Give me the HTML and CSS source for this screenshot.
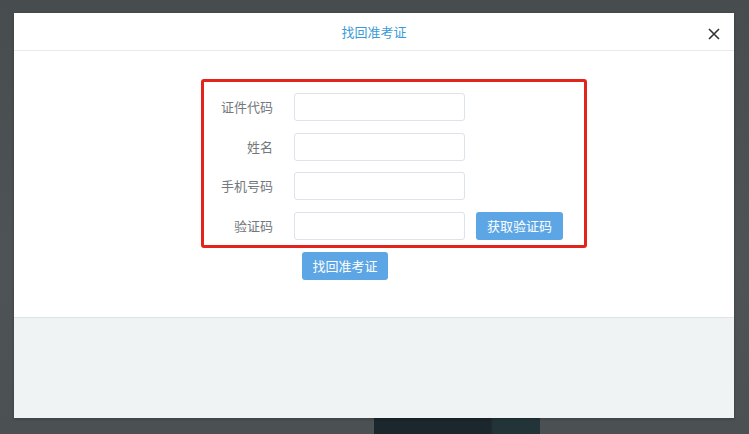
FILE: index.html
```html
<!DOCTYPE html>
<html lang="zh-CN">
<head>
<meta charset="utf-8">
<title>找回准考证</title>
<link rel="stylesheet" href="styles.css">
</head>
<body>
<div class="backdrop-shape"></div>
<div class="dialog">
  <div class="dialog-header">
    <span class="dialog-title">找回准考证</span>
    <span class="close">
      <svg width="12" height="12" viewBox="0 0 12 12"><path d="M1 1L11 11M11 1L1 11" stroke="#333" stroke-width="1.6" fill="none"/></svg>
    </span>
  </div>
  <div class="dialog-body">
    <div class="form-box">
      <div class="row"><label class="label">证件代码</label><input class="input" type="text"></div>
      <div class="row"><label class="label">姓名</label><input class="input" type="text"></div>
      <div class="row"><label class="label">手机号码</label><input class="input" type="text"></div>
      <div class="row"><label class="label">验证码</label><input class="input" type="text"><button class="btn btn-code">获取验证码</button></div>
    </div>
    <button class="btn btn-submit">找回准考证</button>
  </div>
  <div class="dialog-footer"></div>
</div>
</body>
</html>
```

FILE: styles.css
```css
html, body {
  margin: 0;
  padding: 0;
}
body {
  width: 749px;
  height: 434px;
  overflow: hidden;
  background: linear-gradient(180deg, #474d4e 0%, #4e5455 60%, #4b5152 100%);
  font-family: "Noto Sans CJK SC", "Noto Sans", sans-serif;
  position: relative;
}
.backdrop-shape {
  position: absolute;
  left: 374px;
  top: 412px;
  width: 166px;
  height: 30px;
  background: linear-gradient(90deg, #1c272d 0%, #1c272d 70%, #233439 72%, #233439 100%);
  border-radius: 4px 4px 0 0;
}
.dialog {
  position: relative;
  margin: 13px 0 0 14px;
  width: 720px;
  height: 405px;
  background: #fff;
  display: flex;
  flex-direction: column;
  box-shadow: 0 1px 3px rgba(0,0,0,0.25);
}
.dialog-header {
  height: 37px;
  border-bottom: 1px solid #e8ebed;
  display: flex;
  align-items: center;
  justify-content: center;
  position: relative;
}
.dialog-title {
  font-size: 13px;
  color: #3b9bd8;
  line-height: 1;
}
.close {
  position: absolute;
  right: 14px;
  top: 15px;
  width: 12px;
  height: 12px;
  display: block;
}
.close svg { display: block; }
.dialog-body {
  height: 266px;
  padding: 28px 0 0 187px;
  box-sizing: border-box;
}
.form-box {
  width: 386px;
  height: 169px;
  box-sizing: border-box;
  border: 3px solid #e3241d;
  border-radius: 3px;
  padding: 11px 0 0 0;
  display: flex;
  flex-direction: column;
  gap: 11.5px;
}
.row {
  display: flex;
  align-items: center;
  height: 28px;
}
.label {
  width: 69px;
  text-align: right;
  font-size: 13px;
  color: #74787c;
  margin-right: 21px;
  line-height: 28px;
}
.input {
  width: 171px;
  height: 28px;
  box-sizing: border-box;
  border: 1px solid #dde3e8;
  border-radius: 3px;
  background: #fff;
  padding: 0 6px;
  margin: 0;
  outline: none;
}
.btn {
  border: none;
  border-radius: 3px;
  background: #5ca6e6;
  color: #fff;
  font-family: "Noto Sans CJK SC", "Noto Sans", sans-serif;
  font-size: 13px;
  height: 28px;
  padding: 0;
  margin: 0;
  line-height: 28px;
}
.btn-code {
  width: 87px;
  margin-left: 11px;
}
.btn-submit {
  display: block;
  width: 86px;
  margin: 4px 0 0 101px;
}
.dialog-footer {
  flex: 1;
  background: #eff3f4;
  border-top: 1px solid #dfe3e5;
}
```
